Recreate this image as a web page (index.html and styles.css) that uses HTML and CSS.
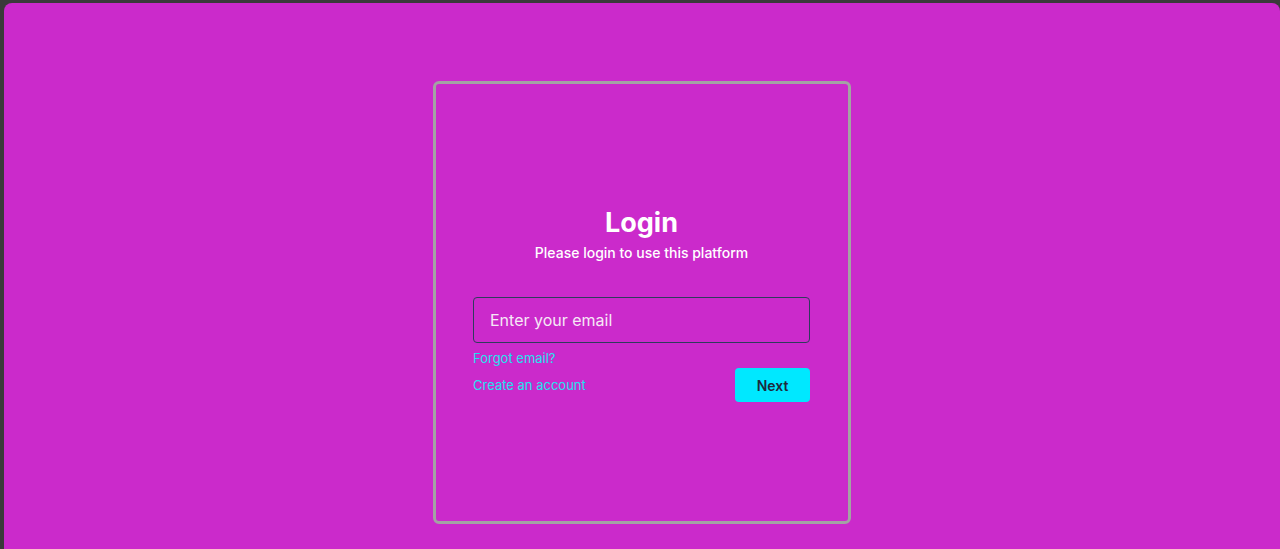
FILE: index.html
```html
<!DOCTYPE html>
<html>
<head>
<meta charset="UTF-8">
<title>Login</title>
<link rel="stylesheet" href="styles.css">
</head>
<body>

<div class="page">

<div class="card">
<div class="heading">
<h1>Login</h1>
<p>Please login to use this platform</p>
</div>

<input class="email" type="text" placeholder="Enter your email">

<a class="link forgot" href="#">Forgot email?</a>

<div class="actions">
<a class="link" href="#">Create an account</a>
<button class="next">Next</button>
</div>
</div>

</div>

</body>
</html>
```

FILE: styles.css
```css
body{
    margin:0;
    background:#3a3a3a;
    font-family:Inter, "Liberation Sans", sans-serif;
    color:white;
    height:549px;
    overflow:hidden;
}

.page{
    margin:3px 0 0 4px;
    height:546px;
    background:#cb2acb;
    border-radius:8px 8px 0 0;
    padding-top:78px;
    box-sizing:border-box;
}

.card{
    width:418px;
    height:443px;
    margin:0 auto;
    box-sizing:border-box;
    border:3px solid #a3a3a3;
    border-radius:6px;
    padding:122px 38px 0 37px;
    display:flex;
    flex-direction:column;
}

.heading{
    text-align:center;
    margin-bottom:34px;
}

.heading h1{
    margin:0;
    font-size:27px;
    font-weight:700;
    line-height:34px;
}

.heading p{
    margin:3px 0 0;
    font-size:14px;
    font-weight:500;
    line-height:20px;
}

.email{
    height:46px;
    box-sizing:border-box;
    border:1.5px solid #2f3b5c;
    border-radius:4px;
    background:transparent;
    padding:0 16px;
    font-family:inherit;
    font-size:16px;
    color:white;
    outline:none;
}

.email::placeholder{
    color:#f6e8f6;
}

.link{
    color:#1ee3f0;
    text-decoration:none;
    font-size:13px;
    line-height:16px;
}

.forgot{
    margin-top:7px;
}

.actions{
    display:flex;
    justify-content:space-between;
    align-items:center;
    margin-top:2px;
}

.next{
    width:75px;
    height:34px;
    border:none;
    border-radius:4px;
    background:#00e8ff;
    color:#1f2a3c;
    font-family:inherit;
    font-size:14px;
    font-weight:600;
}
```
